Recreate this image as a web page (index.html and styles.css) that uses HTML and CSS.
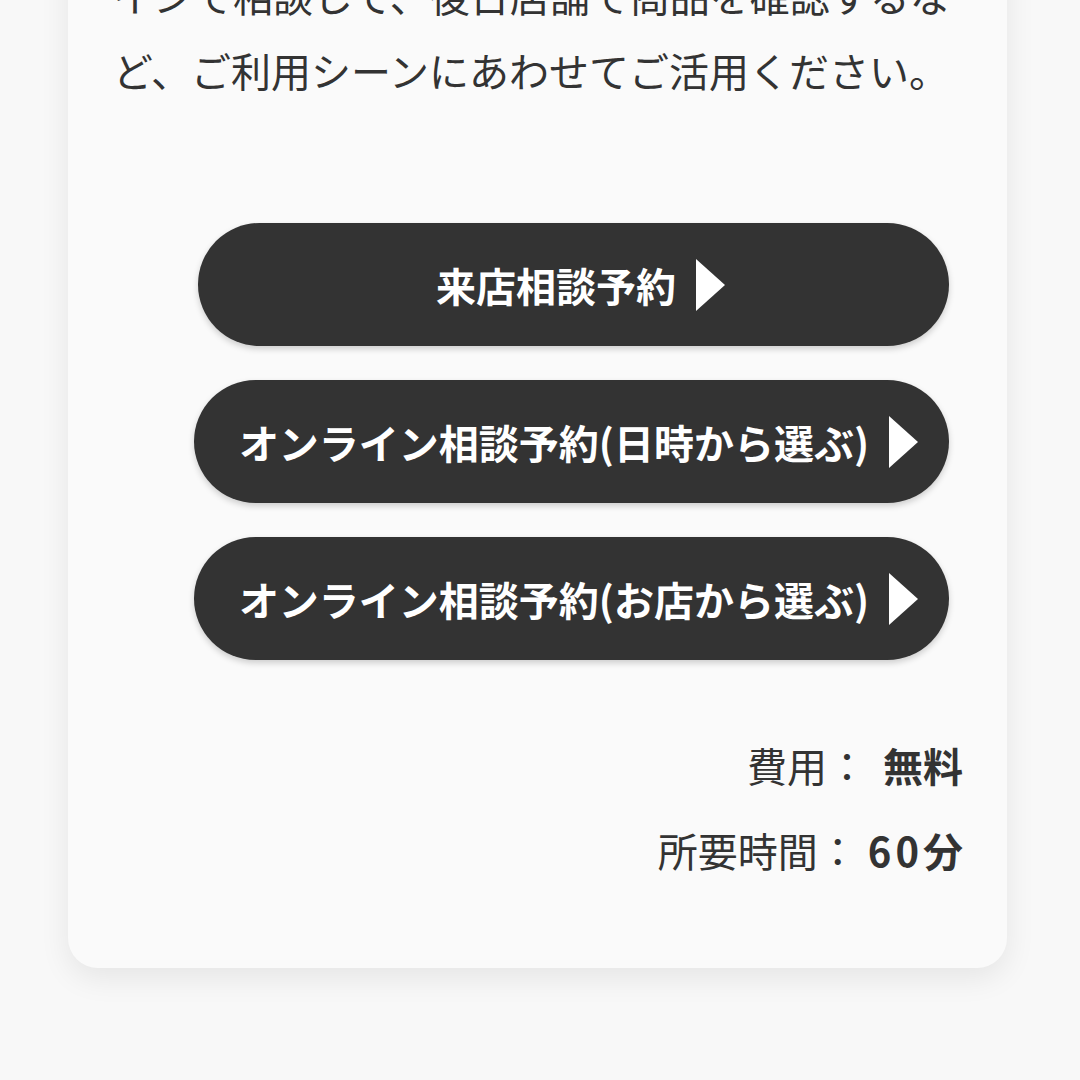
FILE: index.html
```html
<!DOCTYPE html>
<html lang="ja">
<head>
    <meta charset="UTF-8">
    <title>相談予約</title>
    <link rel="stylesheet" href="styles.css">
</head>
<body>

<div class="page">
    <div class="card">
        <p class="lead">インで相談して、後日店舗で商品を確認するなど、ご利用シーンにあわせてご活用ください。</p>

        <div class="buttons">
            <a href="" class="btn btn-short"><span>来店相談予約</span><i class="arrow"></i></a>
            <a href="" class="btn"><span>オンライン相談予約(日時から選ぶ)</span><i class="arrow"></i></a>
            <a href="" class="btn"><span>オンライン相談予約(お店から選ぶ)</span><i class="arrow"></i></a>
        </div>

        <dl class="info">
            <div class="info-row"><dt>費用：</dt><dd>無料</dd></div>
            <div class="info-row"><dt>所要時間：</dt><dd><span class="num">60</span>分</dd></div>
        </dl>
    </div>
</div>

</body>
</html>
```

FILE: styles.css
```css
html, body, div, p, dl, dt, dd, a {
    margin: 0;
    padding: 0;
}
html, body {
    width: 100%;
    height: 100%;
    background-color: #f8f8f8;
    overflow: hidden;
}
body {
    font-family: "Noto Sans CJK JP", "Noto Sans", sans-serif;
    color: #333;
}
a {
    text-decoration: none;
}
.page {
    padding: 0 73px 0 68px;
}
.card {
    margin-top: -42px;
    padding: 0 44px 75px 45px;
    background-color: #fafafa;
    border-radius: 0 0 30px 30px;
    box-shadow: 0 10px 30px rgba(0, 0, 0, .08);
}
.lead {
    font-size: 40px;
    line-height: 75px;
}
.buttons {
    display: flex;
    flex-direction: column;
    align-items: flex-end;
    gap: 34px;
    margin-top: 115px;
    padding-right: 14px;
}
.btn {
    display: flex;
    align-items: center;
    justify-content: center;
    width: 755px;
    height: 123px;
    padding-left: 14px;
    box-sizing: border-box;
    border-radius: 62px;
    background-color: #333;
    color: #fff;
    font-size: 40px;
    font-weight: bold;
    line-height: 1;
    box-shadow: 0 3px 6px rgba(0, 0, 0, .18);
}
.btn-short {
    width: 751px;
}
.btn>.arrow {
    display: inline-block;
    width: 0;
    height: 0;
    margin-left: 20px;
    border-left: 29px solid #fff;
    border-top: 26px solid transparent;
    border-bottom: 26px solid transparent;
}
.info {
    margin-top: 63px;
    font-size: 40px;
    line-height: 85px;
}
.info-row {
    display: flex;
    justify-content: flex-end;
}
.info dd {
    margin-left: 16px;
    font-weight: bold;
}
.info .num {
    letter-spacing: 4px;
    margin-left: -6px;
}
```
